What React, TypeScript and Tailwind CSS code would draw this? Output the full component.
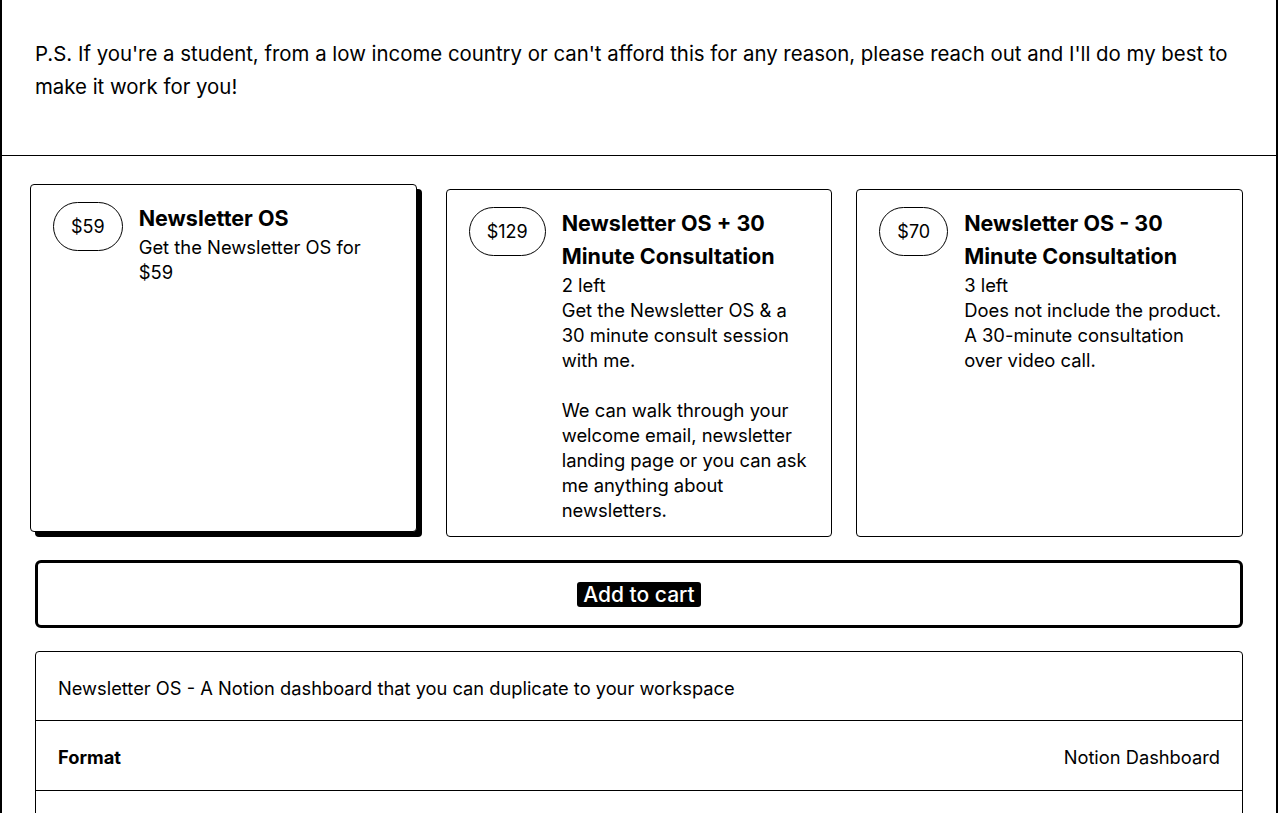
type Variant = {
  price: string;
  name: string;
  left?: string;
  description: string;
  selected?: boolean;
};

const variants: Variant[] = [
  { price: "$59", name: "Newsletter OS", description: "Get the Newsletter OS for $59", selected: true },
  {
    price: "$129",
    name: "Newsletter OS + 30 Minute Consultation",
    left: "2 left",
    description:
      "Get the Newsletter OS & a\n30 minute consult session with me.\n\nWe can walk through your welcome email, newsletter landing page or you can ask me anything about newsletters.",
  },
  {
    price: "$70",
    name: "Newsletter OS - 30 Minute Consultation",
    left: "3 left",
    description: "Does not include the product. A 30-minute consultation over video call.",
  },
];

function VariantCard({ v }: { v: Variant }) {
  return (
    <div
      className={`flex gap-4 rounded-[4px] border border-black bg-white pt-[17px] pb-[13px] pl-[22px] pr-[18px] ${
        v.selected ? "-translate-x-[5px] -translate-y-[5px] shadow-[5px_5px_0_0_#000]" : ""
      }`}
    >
      <div className="shrink-0 self-start rounded-full border border-black px-[17px] py-[11px] text-[18px] leading-[25px]">
        {v.price}
      </div>
      <div className="min-w-0 flex-1">
        <h3 className="text-[21.5px] font-bold leading-[33px]">{v.name}</h3>
        {v.left && <div className="text-[18.4px] leading-[25px]">{v.left}</div>}
        <p className="whitespace-pre-line text-[18.4px] leading-[25px]">{v.description}</p>
      </div>
    </div>
  );
}

export default function App() {
  return (
    <div className="min-h-screen bg-white font-['Inter',sans-serif] text-black">
      <div className="w-[1278px] border-x-2 border-black">
        <div className="border-b border-black px-[33px] pt-[37px] pb-[52px]">
          <p className="text-[20.4px] leading-[33px]">
            P.S. If you're a student, from a low income country or can't afford this for any reason, please reach out and
            I'll do my best to make it work for you!
          </p>
        </div>

        <div className="px-[33px] pt-[33px] pb-10">
          <div className="grid grid-cols-3 gap-6">
            {variants.map((v) => (
              <VariantCard key={v.price} v={v} />
            ))}
          </div>

          <button className="mt-[23px] flex h-[68px] w-full items-center justify-center rounded-[6px] border-[3px] border-black bg-white">
            <span className="rounded-[3px] bg-black px-[6px] text-[21px] font-medium leading-[25px] text-white">
              Add to cart
            </span>
          </button>

          <div className="mt-[23px] rounded-[4px] border border-black">
            <div className="px-[22px] pt-[25px] pb-[21px] text-[18.3px] leading-[22px]">
              Newsletter OS - A Notion dashboard that you can duplicate to your workspace
            </div>
            <div className="flex items-center justify-between border-t border-black px-[22px] pt-[25px] pb-[22px] text-[18.3px] leading-[22px]">
              <span className="font-bold">Format</span>
              <span>Notion Dashboard</span>
            </div>
            <div className="border-t border-black px-[22px] py-[23px] text-[18.3px] leading-[22px]">
              <span className="font-bold">&nbsp;</span>
            </div>
          </div>
        </div>
      </div>
    </div>
  );
}
